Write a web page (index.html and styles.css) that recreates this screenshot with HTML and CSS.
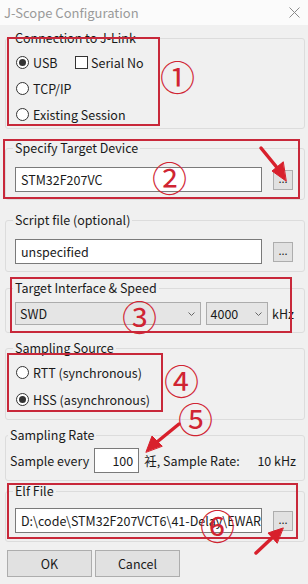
FILE: index.html
```html
<!DOCTYPE html>
<html lang="en">

<head>
    <meta charset="UTF-8">
    <meta name="viewport" content="width=device-width, initial-scale=1.0">
    <title>J-Scope Configuration</title>
    <link rel="stylesheet" href="styles.css">
</head>

<body>
    <div class="window">
        <div class="titlebar">
            <span class="title">J-Scope Configuration</span>
            <svg class="close" width="11" height="11" viewBox="0 0 11 11">
                <path d="M0.5 0.5 L10.5 10.5 M10.5 0.5 L0.5 10.5" stroke="#8a8a8a" stroke-width="1" fill="none" />
            </svg>
        </div>

        <div class="content">
            <fieldset class="group group-conn">
                <legend>Connection to J-Link</legend>
                <div class="option-row">
                    <span class="radio checked"></span><span class="opt-usb">USB</span>
                    <span class="checkbox"></span><span>Serial No</span>
                </div>
                <div class="option-row">
                    <span class="radio"></span><span>TCP/IP</span>
                </div>
                <div class="option-row">
                    <span class="radio"></span><span>Existing Session</span>
                </div>
            </fieldset>

            <fieldset class="group group-device">
                <legend>Specify Target Device</legend>
                <div class="field-row">
                    <div class="textbox">STM32F207VC</div>
                    <div class="browse">...</div>
                </div>
            </fieldset>

            <fieldset class="group group-script">
                <legend>Script file (optional)</legend>
                <div class="field-row">
                    <div class="textbox">unspecified</div>
                    <div class="browse">...</div>
                </div>
            </fieldset>

            <fieldset class="group group-speed">
                <legend>Target Interface &amp; Speed</legend>
                <div class="field-row">
                    <div class="combo combo-if">
                        <span>SWD</span>
                        <svg class="chevron" width="7" height="4" viewBox="0 0 7 4">
                            <path d="M0.5 0.5 L3.5 3.5 L6.5 0.5" stroke="#666" fill="none" />
                        </svg>
                    </div>
                    <div class="combo combo-speed">
                        <span>4000</span>
                        <svg class="chevron" width="7" height="4" viewBox="0 0 7 4">
                            <path d="M0.5 0.5 L3.5 3.5 L6.5 0.5" stroke="#666" fill="none" />
                        </svg>
                    </div>
                    <span class="unit">kHz</span>
                </div>
            </fieldset>

            <fieldset class="group group-source">
                <legend>Sampling Source</legend>
                <div class="option-row tall">
                    <span class="radio"></span><span>RTT (synchronous)</span>
                </div>
                <div class="option-row tall">
                    <span class="radio checked"></span><span>HSS (asynchronous)</span>
                </div>
            </fieldset>

            <fieldset class="group group-rate">
                <legend>Sampling Rate</legend>
                <div class="field-row">
                    <span>Sample every</span>
                    <div class="textbox small-box">100</div>
                    <span class="rate-text">衽, Sample Rate:</span>
                    <span class="rate-value">10 kHz</span>
                </div>
            </fieldset>

            <fieldset class="group group-elf">
                <legend>Elf File</legend>
                <div class="field-row">
                    <div class="textbox">D:\code\STM32F207VCT6\41-Delay\EWARM\Delay.out</div>
                    <div class="browse">...</div>
                </div>
            </fieldset>

            <div class="actions">
                <div class="btn">OK</div>
                <div class="btn">Cancel</div>
            </div>
        </div>

        <!-- red annotations drawn over the dialog -->
        <div class="mark-box box-1"></div>
        <div class="mark-box box-2"></div>
        <div class="mark-box box-3"></div>
        <div class="mark-box box-4"></div>
        <div class="mark-box box-5"></div>

        <span class="mark-num num-1">①</span>
        <span class="mark-num num-2">②</span>
        <span class="mark-num num-3">③</span>
        <span class="mark-num num-4">④</span>
        <span class="mark-num num-5">⑤</span>
        <span class="mark-num num-6">⑥</span>

        <svg class="arrows" width="308" height="584" viewBox="0 0 308 584">
            <g stroke="#d8202c" stroke-width="3.5" stroke-linecap="round" fill="#d8202c">
                <line x1="261" y1="148" x2="279" y2="170" />
                <polygon points="286,181 272,171 283,162" stroke-width="1" />
                <line x1="179" y1="424" x2="157" y2="442" />
                <polygon points="146,452 152,436 162,446" stroke-width="1" />
                <line x1="256" y1="553" x2="273" y2="537" />
                <polygon points="283,528 268,533 277,543" stroke-width="1" />
            </g>
        </svg>
    </div>
</body>

</html>
```

FILE: styles.css
```css
body {
    margin: 0;
    padding: 0;
    font-family: "Noto Sans CJK SC", "Noto Sans", sans-serif;
    font-size: 12.5px;
    color: #1a1a1a;
}

.window {
    position: relative;
    width: 308px;
    height: 584px;
    background-color: #f0f0f0;
    overflow: hidden;
}

.titlebar {
    height: 25px;
    background-color: #fbfbfb;
    display: flex;
    align-items: center;
    justify-content: space-between;
    padding: 0 8px 0 4px;
}

.title {
    color: #9a9a9a;
    font-size: 13px;
}

.content {
    display: flex;
    flex-direction: column;
    padding: 5px 3px 0 5px;
}

.group {
    margin: 0;
    min-width: 0;
    border: 1px solid #dcdcdc;
    border-radius: 3px;
    padding: 11px 10px 7px 9px;
}

.group legend {
    padding: 0 2px;
    margin-left: -2px;
    line-height: 16px;
}

.group-conn {
    padding-top: 3px;
    padding-bottom: 1px;
}

.group-device {
    margin-top: 11px;
}

.group-script {
    margin-top: 12px;
}

.group-speed {
    margin-top: 8px;
    padding-top: 6px;
}

.group-source {
    margin-top: 7px;
    padding-top: 3px;
    padding-bottom: 6px;
}

.group-rate {
    margin-top: 7px;
    padding-top: 5px;
    padding-left: 4px;
    padding-right: 8px;
}

.group-elf {
    margin-top: 2px;
    padding-top: 9px;
    padding-bottom: 8px;
}

.option-row {
    height: 26px;
    display: flex;
    align-items: center;
}

.option-row.tall {
    height: 27px;
}

.radio {
    width: 11px;
    height: 11px;
    border: 1px solid #333;
    border-radius: 50%;
    margin: 0 4px 0 1px;
    position: relative;
    background-color: #fff;
}

.radio.checked::after {
    content: "";
    position: absolute;
    top: 2px;
    left: 2px;
    width: 7px;
    height: 7px;
    border-radius: 50%;
    background-color: #333;
}

.opt-usb {
    width: 42px;
}

.checkbox {
    width: 11px;
    height: 11px;
    border: 1px solid #333;
    background-color: #fff;
    margin-right: 3px;
}

.field-row {
    display: flex;
    align-items: center;
}

.textbox {
    width: 247px;
    height: 25px;
    box-sizing: border-box;
    border: 1px solid #7a7a7a;
    background-color: #fff;
    padding: 0 5px;
    line-height: 23px;
    white-space: nowrap;
    overflow: hidden;
}

.browse {
    width: 20px;
    height: 20px;
    box-sizing: border-box;
    margin-left: 11px;
    border: 1px solid #adadad;
    background-color: #e1e1e1;
    font-size: 11px;
    line-height: 14px;
    text-align: center;
}

.combo {
    height: 23px;
    box-sizing: border-box;
    border: 1px solid #acacac;
    background-color: #e5e5e5;
    display: flex;
    align-items: center;
    justify-content: space-between;
    padding: 0 5px 0 4px;
}

.combo-if {
    width: 187px;
}

.combo-speed {
    width: 63px;
    margin-left: 5px;
}

.chevron {
    flex: none;
}

.unit {
    margin-left: 4px;
}

.small-box {
    width: 45px;
    margin-left: 5px;
    text-align: right;
}

.rate-text {
    margin-left: 5px;
}

.rate-value {
    margin-left: auto;
}

.actions {
    display: flex;
    gap: 3px;
    margin-top: 8px;
    padding-left: 2px;
}

.btn {
    width: 85px;
    height: 27px;
    box-sizing: border-box;
    border: 1px solid #adadad;
    background-color: #e1e1e1;
    line-height: 25px;
    text-align: center;
}

/* annotations */
.mark-box {
    position: absolute;
    border: 2px solid #c8283a;
    box-sizing: border-box;
}

.box-1 {
    left: 7px;
    top: 37px;
    width: 153px;
    height: 89px;
}

.box-2 {
    left: 3px;
    top: 139px;
    width: 297px;
    height: 60px;
}

.box-3 {
    left: 10px;
    top: 277px;
    width: 282px;
    height: 56px;
}

.box-4 {
    left: 7px;
    top: 353px;
    width: 156px;
    height: 59px;
}

.box-5 {
    left: 7px;
    top: 483px;
    width: 291px;
    height: 56px;
}

.mark-num {
    position: absolute;
    color: #d02432;
    font-size: 35px;
    line-height: 35px;
}

.num-1 {
    left: 160px;
    top: 58px;
}

.num-2 {
    left: 152px;
    top: 159px;
}

.num-3 {
    left: 122px;
    top: 298px;
}

.num-4 {
    left: 164px;
    top: 362px;
}

.num-5 {
    left: 178px;
    top: 400px;
}

.num-6 {
    left: 200px;
    top: 507px;
}

.arrows {
    position: absolute;
    left: 0;
    top: 0;
    pointer-events: none;
}
```
